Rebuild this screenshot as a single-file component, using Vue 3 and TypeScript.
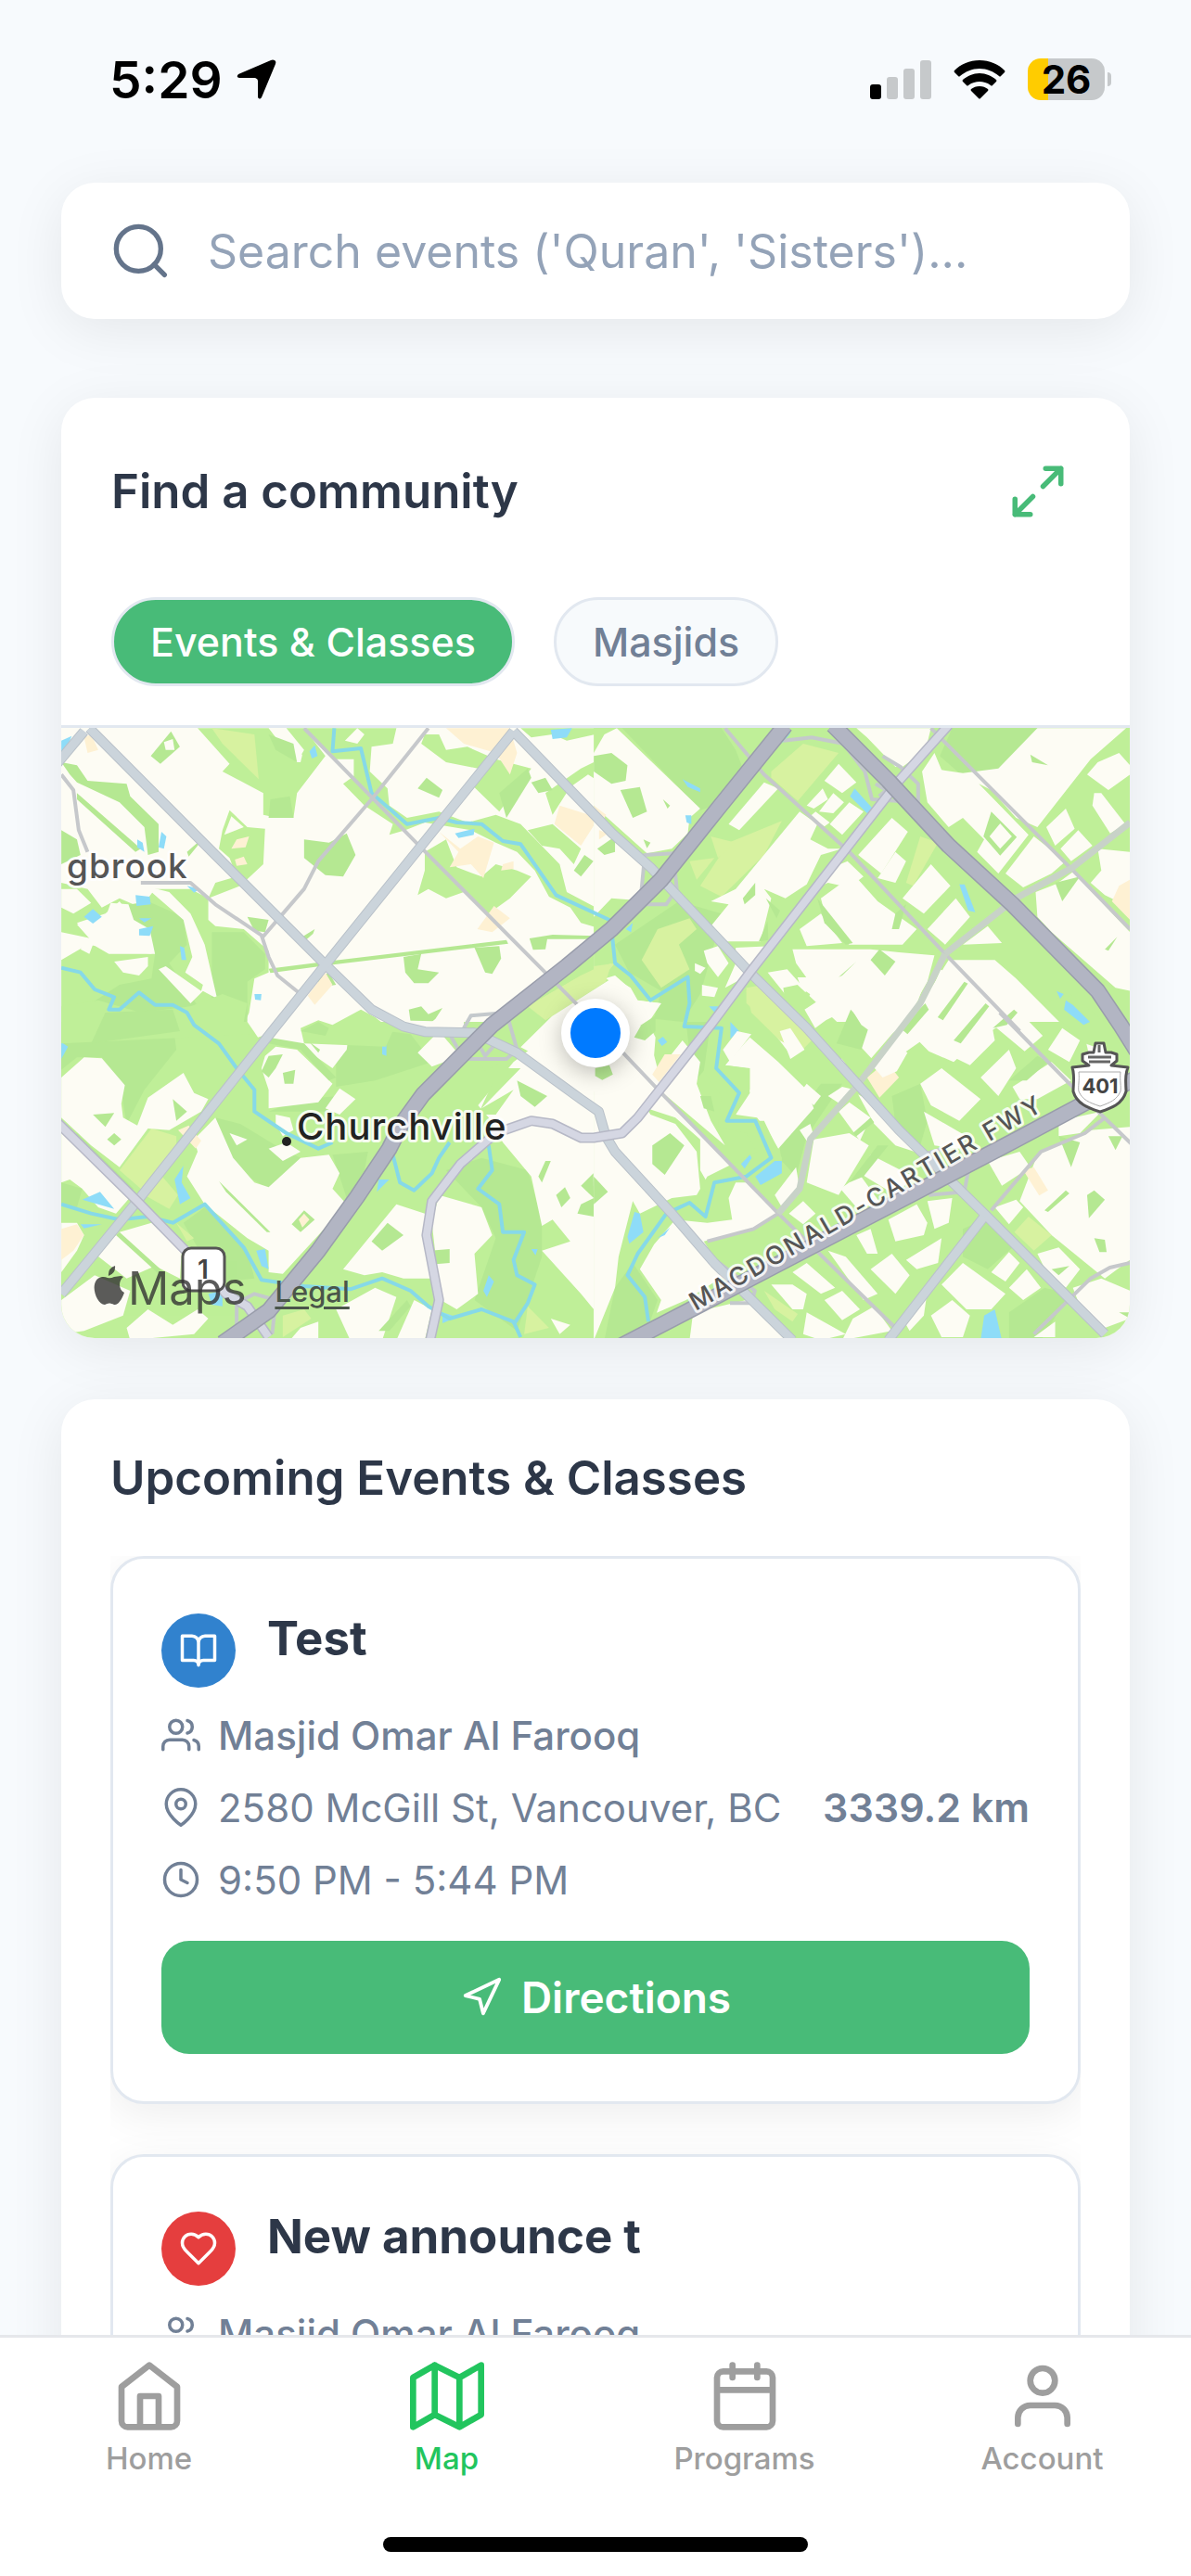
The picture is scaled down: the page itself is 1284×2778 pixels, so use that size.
<script setup lang="ts">
import { ref } from 'vue'

interface Shape {
  fill: string
  points: string[]
}
interface Line {
  kind: string
  points: string
}
interface EventItem {
  title: string
  org: string
  address: string
  distance: string
  time: string
  tone: 'blue' | 'red'
  icon: string
}

const land = '#fdfcf4'
const park = '#bfef98'
const wood = '#b5e892'
const field = '#d7f2a0'
const water = '#8edcf8'
const sand = '#fef1d3'

// Map tiles: origin of each quarter in survey units, with its ground cover
const tiles: { x: number; y: number; shapes: Shape[] }[] = [
  {
    x: 0,
    y: 0,
    shapes: [
      { fill: land, points: ['0,0 1516,0 1516,1000 0,1000'] },
      {
        fill: park,
        points: [
          '400,40 600,40 620,70 650,120 680,150 700,110 650,40 700,40 760,130 720,190 680,250 670,330 625,330 585,320 585,250 520,210 470,180 490,155',
          '700,40 960,40 950,90 890,100 885,180 935,235 940,290 990,330 1080,310 1160,345 1240,320 1310,350 1420,480 1440,570 1530,625 1568,600 1568,700 1480,670 1450,620 1390,585 1350,500 1300,440 1240,410 1170,370 1040,345 985,370 940,385 950,350 870,290 810,220 840,195 840,140 780,140',
          '1040,60 1080,60 1100,110 1160,100 1240,140 1340,170 1250,310 1170,220 1190,170 1100,150 1030,90',
          '490,305 540,360 590,365 585,480 520,550 430,590 450,540 510,520 490,460 460,430 470,370',
          '16,540 90,560 130,620 180,590 240,620 280,560 380,560 430,590 430,660 450,680 530,690 600,760 600,830 560,850 545,960 530,1000 16,1000 16,790 90,740 200,760 270,770 270,740 220,660 180,600 140,640 60,670 100,720 16,700',
          '1040,440 1100,400 1130,490 1200,520 1240,480 1300,500 1340,520 1280,590 1220,640 1150,570 1100,590 1050,560 1020,580 1040,500',
          '1310,40 1568,40 1568,110 1520,60 1440,80 1400,60 1340,70',
          '1380,250 1480,170 1516,150 1568,200 1568,240 1500,190 1450,230 1400,320',
          '1330,370 1400,350 1480,430 1460,480 1420,430 1370,420',
          '1320,920 1450,800 1516,770 1516,1000 1300,1000',
        ],
      },
      {
        fill: wood,
        points: [
          '16,150 60,160 90,210 200,220 210,260 290,350 290,440 260,450 250,360 180,280 60,215 40,190',
          '16,370 60,400 70,450 16,480',
          '60,250 240,430 225,440 60,270',
          '268,130 325,50 350,100 295,155',
          '1045,200 1090,240 1080,265 1020,235',
          '700,400 770,410 820,380 845,450 810,520 760,515 700,460',
          '600,818 760,795 1270,725 1275,737 760,808 605,832',
          '980,780 1030,770 1020,820 1080,830 1050,865 1010,865 985,830',
          '1180,750 1250,745 1255,785 1230,835 1210,830',
          '1335,720 1400,708 1520,712 1520,722 1385,722 1380,755 1345,757',
          '995,950 1030,940 1050,965 1090,945 1070,980 1050,1000 1000,990',
          '1460,500 1490,450 1515,470 1480,520',
          '1340,215 1380,200 1400,240 1360,250',
          '540,650 600,660 590,700 560,695',
          '695,715 730,690 725,705 705,725',
          '370,440 410,400 400,420 375,455',
          '160,620 260,600 360,650 370,740 320,800 430,990 200,1000 100,930 180,870 270,850 280,770',
          '440,700 530,700 590,770 590,820 540,860 540,990 440,1000',
          '740,850 770,830 790,870 740,880',
          '1250,250 1330,170 1340,200 1270,330',
          '600,60 670,90 680,150 620,110',
          '605,270 660,260 670,330 600,330',
        ],
      },
      {
        fill: field,
        points: ['440,40 560,60 572,205 470,90', '1330,940 1480,840 1516,820 1516,880 1380,990'],
      },
      {
        fill: land,
        points: [
          '495,325 530,360 475,385',
          '305,85 330,75 335,110 310,110',
          '16,560 60,560 100,605 50,640 16,620',
          '250,550 320,570 380,640 420,740 455,915 415,890 380,930 290,820 310,810 410,890 415,870 365,830 385,780 360,660 290,590',
          '165,795 260,780 260,810 235,840 190,830',
          '60,675 140,655 155,605 205,610 220,660 265,690 280,770 150,770 105,740 95,770 70,755 95,720',
          '680,120 695,125 690,150 680,150',
          '815,80 850,40 870,60 850,90',
        ],
      },
      {
        fill: sand,
        points: [
          '1100,40 1280,40 1300,120 1280,190 1240,120 1150,90',
          '80,70 100,60 120,110 90,120',
          '1420,290 1530,330 1480,420 1405,350',
          '1235,615 1280,655 1230,700 1188,690',
          '760,830 780,870 730,935 710,905',
          '510,400 545,390 535,425 495,430',
          '505,465 530,455 540,480 510,485',
          '1080,375 1140,430 1190,390 1235,410 1205,525 1170,480 1110,490 1135,440',
          '1260,480 1290,470 1290,495 1255,500',
        ],
      },
      {
        fill: water,
        points: [
          '230,400 245,410 250,440 230,425',
          '298,375 312,390 305,430 290,425',
          '715,115 730,95 738,130 722,138',
          '80,650 105,625 130,650 105,672',
          '225,580 265,585 268,610 228,615',
          '235,690 275,680 265,712 235,710',
          '235,655 270,655 250,668',
          '370,550 405,560 390,572',
          '350,745 362,750 368,790 355,790',
          '560,900 580,900 578,920 562,918',
          '1125,380 1180,365 1178,385 1135,395',
          '16,80 45,65 30,110 16,120',
          '1395,45 1455,40 1440,70 1400,75',
        ],
      },
    ],
  },
  {
    x: 1516,
    y: 0,
    shapes: [
      { fill: park, points: ['0,0 1520,0 1520,1000 0,1000'] },
      {
        fill: wood,
        points: [
          '80,40 360,40 400,110 420,170 340,290 300,305',
          '1010,40 1250,40 1140,185 1030,185 975,130',
          '60,740 240,600 360,640 330,780 300,900 250,990 170,980 190,890 100,830',
        ],
      },
      {
        fill: field,
        points: [
          '500,180 590,90 690,120 575,275 500,200',
          '380,410 530,340 480,450 360,585 300,550',
          '330,390 400,410 350,460',
          '270,470 340,460 290,530',
          '920,390 970,410 900,550 880,540',
          '180,690 270,655 290,690 240,740 270,820 190,880 135,790',
          '0,810 60,800 0,880',
          '430,880 480,870 590,1000 500,1000 430,930',
        ],
      },
      {
        fill: land,
        points: [
          '65,40 300,300 270,330 265,380 220,430 150,445 0,290 0,120 30,60',
          '0,320 140,490 140,570 100,595 50,590 0,650',
          '480,215 520,235 410,370 380,350',
          '690,155 740,215 700,250 650,210',
          '645,235 660,270 620,300 600,290',
          '675,250 705,280 675,315 635,310',
          '720,280 760,310 700,385 665,350',
          '625,310 665,345 650,358 610,325',
          '580,310 630,350 610,400 660,430 700,430 640,450 600,545 540,590 480,560 500,590 470,730 370,730 330,680 380,610 330,600 400,560',
          '840,330 885,375 810,510 745,450',
          '850,440 880,470 850,540 800,525',
          '950,480 1005,550 930,640 870,590',
          '1020,590 1060,650 990,740 940,690',
          '740,40 950,40 935,110 870,165 850,165 770,70',
          '925,180 960,120 980,175 1040,185 1140,170 1250,40 1500,40 1400,140 1250,360 1190,330 1120,240 1085,220 1225,385 1140,510 1080,440 1100,400 1040,330 1000,360 940,280',
          '1240,390 1330,470 1290,510 1210,555 1160,510',
          '1330,300 1355,365 1300,420 1275,360',
          '1365,370 1405,420 1345,470 1315,430',
          '1410,250 1430,250 1498,350 1455,380 1405,290',
          '1480,120 1511,160 1511,190 1450,240 1390,190 1420,150',
          '1245,570 1300,545 1320,530 1350,505 1511,700 1511,890 1470,880 1290,700 1250,650',
          '1420,430 1511,440 1511,620 1440,580 1400,540 1430,500',
          '640,590 700,540 730,510 800,600 910,690 870,740 720,740 660,680',
          '650,500 715,470 760,520 720,555 660,540 600,570',
          '560,755 780,755 860,765 960,775 940,860 870,1000 620,1000 640,960 600,920 620,880 570,800',
          '580,690 640,640 700,735 600,745',
          '1040,740 1110,680 1150,735',
          '1000,790 1130,790 1190,850 1320,1000 870,1000 940,900',
          '310,760 350,745 380,800 350,845 320,800',
          '400,750 500,745 450,830 370,880 400,800',
          '490,830 545,820 600,890 560,930',
          '285,800 315,815 300,835 285,825',
          '305,870 350,880 340,910 305,905',
          '0,860 60,840 100,880 120,920 190,930 150,1000 0,1000',
        ],
      },
      {
        fill: wood,
        points: [
          '0,130 50,120 95,160 90,210 50,220 0,180',
          '75,240 130,230 150,310 110,330',
          '195,270 215,290 208,300',
          '140,400 160,410 150,428',
          '10,430 60,390 60,440 30,450',
          '420,590 455,540 455,580 425,610',
          '485,590 525,630 515,655',
          '465,730 490,665 492,725',
          '1230,125 1280,160 1235,150',
          '1120,310 1192,392 1145,452 1098,390',
          '1300,540 1370,520 1320,600',
          '690,845 740,795 700,840',
          '780,790 805,755 850,795 820,840',
          '1440,755 1475,715 1450,760',
          '630,590 730,735 710,740 650,670',
          '840,690 850,640 880,610 860,690',
        ],
      },
      { fill: land, points: ['1145,348 1178,390 1145,430 1115,390'] },
      {
        fill: sand,
        points: ['1480,550 1511,530 1511,660 1460,600', '0,290 35,320 25,340 0,320', '15,370 40,380 15,400'],
      },
      {
        fill: water,
        points: [
          '735,235 790,305 770,315 722,260',
          '1030,545 1045,545 1075,635 1055,630',
          '250,205 300,235 300,247 265,230',
          '258,322 275,322 275,350 262,345',
          '1410,850 1435,880 1420,870',
          '90,690 110,670 105,700',
          '325,940 350,940 345,965',
          '545,50 555,55 530,90',
        ],
      },
    ],
  },
  {
    x: 0,
    y: 990,
    shapes: [
      { fill: park, points: ['0,0 1516,0 1516,1030 0,1030'] },
      {
        fill: wood,
        points: [
          '0,0 330,0 340,90 250,220 200,330 180,190 130,115 60,115 0,170',
          '450,310 520,330 620,400 690,440 600,540 540,500 480,420',
          '790,100 870,20 1000,40 1060,130 900,190 790,210',
          '360,650 420,600 540,740 560,830 480,840 400,730',
          '1100,480 1200,440 1330,480 1370,640 1370,760 1300,1000 1180,900 1240,700 1200,600',
          '780,430 880,420 870,480 820,570',
          '700,290 600,290 690,250 800,240 770,290',
        ],
      },
      {
        fill: field,
        points: [
          '270,345 340,370 340,400 240,540 180,480',
          '300,500 345,560 320,605 250,560',
          '340,650 390,700 370,710',
          '640,950 700,930 720,960 640,1020',
          '1330,920 1390,990 1320,1010',
        ],
      },
      {
        fill: land,
        points: [
          '16,180 80,115 130,118 195,205 185,265 190,310 230,335 260,245 360,165 390,230 430,250 410,290 320,350 260,345 180,470 100,400 16,310',
          '16,350 80,400 215,560 170,620 120,600 75,540 40,510 16,520',
          '110,750 180,680 270,650 355,740 350,830 280,790 200,830',
          '16,650 60,650 80,690 60,740 16,810',
          '16,900 110,820 210,870 190,950 80,1000 16,1010',
          '200,990 260,930 330,980 400,930 430,960 390,1010 210,1030',
          '560,0 830,0 820,90 780,150 680,70 600,60',
          '590,110 620,80 680,90 780,200 740,260 600,280 600,220 580,150',
          '450,310 500,440 560,520 600,535 690,440 770,430 800,490 780,540 820,590 640,815 600,810 600,740 540,700 420,590 370,500 400,420 390,380',
          '620,300 660,310 670,350 640,370 620,330',
          '600,410 650,390 690,420 640,450',
          '800,215 845,250 800,300 760,280',
          '1020,100 1080,30 1140,110 1060,145',
          '490,360 540,380 510,400',
          '1190,270 1290,130 1380,50 1450,0 1516,0 1516,930 1480,880 1370,740 1450,710 1400,640 1370,660 1340,500 1260,390 1220,310',
          '960,590 1040,620 1060,830 980,830 920,810 870,820 810,800',
          '1080,560 1200,600 1230,690 1180,750 1190,880 1130,930 1085,900 1060,650',
          '790,930 900,860 960,890 920,1030 830,1030',
          '1010,900 1060,930 1040,1030 960,1030',
          '690,990 740,970 740,1030 660,1030',
          '1395,960 1450,980 1420,1010',
        ],
      },
      {
        fill: park,
        points: ['1250,150 1310,150 1200,280 1290,220 1240,300 1190,300'],
      },
      {
        fill: wood,
        points: [
          '640,165 675,155 670,200 645,200',
          '715,65 745,90 740,100',
          '600,50 700,70 790,180 770,190 690,90 600,70',
          '580,160 600,110 640,105 620,150 600,180',
          '1300,190 1385,240 1350,275 1310,240',
          '935,650 980,690 920,740 890,710',
          '910,1000 990,900 1000,920 940,1000',
          '1055,740 1110,735 1110,780 1055,785',
          '1480,530 1515,490 1516,570',
          '1410,560 1435,535 1450,570 1425,600',
          '1480,590 1516,570 1516,630 1470,620',
          '1360,500 1380,450 1395,450 1370,520',
          '105,300 165,295 140,340',
          '330,250 370,290 340,320',
          '145,380 165,360 185,380 165,400',
          '60,360 220,540 210,550 50,370',
          '460,515 605,680 595,680 480,550',
          '180,680 310,815 290,815 170,690',
          '16,520 75,540 60,600 16,590',
          '665,655 700,610 730,640 690,680',
        ],
      },
      {
        fill: sand,
        points: ['16,670 60,655 80,690 50,740 16,770', '345,350 375,335 410,385 395,410', '685,640 700,620 715,640 695,665'],
      },
      {
        fill: water,
        points: [
          '75,575 125,550 165,605 120,590',
          '335,510 360,465 355,520 380,570 350,590',
          '70,655 130,655 80,668',
          '565,740 590,735 600,800 580,790',
          '832,25 850,22 850,45 832,42',
          '920,60 932,65 932,110 920,105',
          '910,510 940,510 905,550',
          '1205,870 1220,820 1235,840 1215,890',
          '16,65 35,80 16,120',
          '430,880 470,870 470,920 440,915',
          '1090,940 1130,955 1090,975',
          '1340,735 1358,735 1352,755',
        ],
      },
    ],
  },
  {
    x: 1516,
    y: 990,
    shapes: [
      { fill: park, points: ['0,0 1520,0 1520,1030 0,1030'] },
      {
        fill: wood,
        points: [
          '1040,670 1100,640 1190,720 1110,800 1040,760',
          '1170,940 1270,860 1340,880 1260,1030 1170,1030',
          '840,240 920,200 940,320 920,400 850,330',
          '520,380 640,200 700,200 600,370 570,500 530,450',
          '260,0 340,0 330,130 280,200',
        ],
      },
      {
        fill: land,
        points: [
          '0,0 90,90 200,240 520,620 470,660 310,710 370,820 260,900 0,1030',
          '440,50 520,130 600,220 620,280 520,410 500,370 460,310 400,300 440,230 430,150 370,140',
          '160,190 250,60 300,130 290,200 330,320 370,400 200,235',
          '510,40 550,30 580,90 560,115',
          '600,200 640,240 620,270 580,230',
          '690,130 790,0 870,0 780,120 740,140',
          '830,60 900,0 950,40 850,120',
          '920,60 960,20 1000,30 950,90',
          '1000,0 1120,0 1130,60 1060,140 970,90',
          '920,200 980,150 1090,250 1030,320 950,270',
          '1090,180 1170,90 1190,150 1140,240',
          '1180,210 1290,130 1345,190 1250,250 1200,250',
          '1280,90 1320,20 1370,60 1340,130',
          '1380,30 1440,100 1400,130',
          '660,240 700,210 735,220 700,270',
          '580,350 610,330 620,370 600,385',
          '620,380 720,360 775,400 690,560 600,520',
          '690,290 720,260 780,310 750,385',
          '745,235 800,270 930,430 850,400 790,330',
          '780,430 900,500 850,560 750,490',
          '930,290 1050,370 1030,410 960,400',
          '695,540 750,495 810,590 740,600',
          '510,560 570,470 580,540 530,600',
          '550,620 590,580 625,620 590,655',
          '1110,450 1200,420 1230,470 1150,530',
          '1310,320 1430,290 1370,360 1310,370',
          '1250,430 1400,350 1511,340 1511,770 1440,830 1290,690 1200,580',
          '1130,600 1190,575 1210,600 1170,655',
          '830,640 910,590 940,650 930,690 850,710',
          '940,580 1010,570 1000,650 960,670',
          '740,690 780,670 800,750 770,750',
          '880,770 980,700 970,780 910,800',
          '780,800 840,750 890,820 850,880',
          '1040,780 1160,880 1120,930 1050,930 980,850',
          '1120,810 1170,745 1200,780 1160,840',
          '1170,860 1220,800 1260,860 1210,900',
          '1250,750 1310,730 1370,800 1330,860 1280,820',
          '1350,860 1430,830 1511,870 1511,960 1440,990 1370,920',
          '660,740 710,760 800,880 760,900',
          '560,810 600,780 680,860 640,880',
          '500,850 560,850 600,880 590,930 560,930',
          '270,1030 280,940 430,900 560,1030',
          '600,940 710,1010 640,1030 590,1010',
          '650,900 700,870 750,930 700,965',
          '730,960 790,920 840,1000 700,1030',
          '870,960 940,870 930,950 890,1000',
          '950,950 1010,900 1060,950 1040,1020 980,1020',
          '1240,1020 1300,970 1300,1020',
        ],
      },
      {
        fill: park,
        points: [
          '330,0 440,40 370,140 440,150 440,220 400,280 400,320 480,320 530,440 520,520 400,520 380,570 390,640 320,650 230,640 170,720 130,800 190,900 150,1030 0,1030 60,860 70,760 110,580 130,620 220,570 290,560 320,500 460,420 430,360 350,340 360,240 310,160',
          '150,280 230,310 300,380 300,480 340,560 300,540 290,420 230,330 160,300',
          '430,800 480,720 540,680 560,720 440,850',
        ],
      },
      {
        fill: wood,
        points: [
          '165,400 215,360 255,400 200,495 165,460',
          '0,500 40,550 0,590',
          '300,240 330,240 340,290 310,280',
          '60,860 110,780 180,900 140,1030 30,1030',
          '1170,190 1250,110 1280,130 1220,190',
          '1390,560 1410,545 1440,575 1395,635',
          '1270,610 1330,545 1340,555 1280,615',
          '1410,700 1440,705 1445,745 1425,745',
          '1310,370 1370,390 1345,470',
          '1450,370 1490,370 1470,415',
          '1290,800 1340,790 1310,820',
          '1480,940 1511,940 1511,960',
          '730,360 780,310 790,325 740,370',
          '720,520 800,400 830,400 760,500',
        ],
      },
      {
        fill: sand,
        points: ['770,180 825,128 860,180 805,245', '1210,480 1240,470 1280,545 1255,562'],
      },
      {
        fill: field,
        points: ['1185,680 1225,630 1290,690 1240,740', '480,870 575,945 560,970 510,930', '490,0 560,0 600,70 570,90'],
      },
      {
        fill: water,
        points: [
          '1100,950 1130,930 1150,1030 1090,1030',
          '455,500 510,450 530,450 530,490 470,528',
          '415,460 440,430 445,440 425,475',
          '115,615 130,620 140,680 100,718 95,695',
          '180,700 215,665 200,690',
          '180,60 195,48 207,65 192,78',
          '385,0 410,30 385,55',
        ],
      },
    ],
  },
  // Ground that crosses the quarters' shared edges
  {
    x: 0,
    y: 0,
    shapes: [
      {
        fill: park,
        points: [
          '16,940 120,920 240,960 380,940 470,900 540,930 530,990 560,1030 16,1060',
          '690,1010 740,985 780,1000 860,950 900,975 950,1020 930,1070 700,1060',
          '1240,1000 1400,900 1516,830 1600,880 1516,960 1300,1090 1210,1150 1180,1100',
          '2050,880 2090,870 2220,1010 2300,1110 2250,1160 2180,1060 2060,960',
          '2780,930 2860,900 3027,1060 3027,1110 2900,1060',
        ],
      },
      {
        fill: field,
        points: ['1330,940 1480,840 1566,800 1550,860 1380,985', '1946,890 1996,875 2130,1050 2100,1085 2040,1050 1960,960'],
      },
      {
        fill: wood,
        points: ['690,1020 740,990 770,1010 760,1035', '2200,1060 2240,950 2290,1010 2270,1080', '140,960 330,950 350,1020 100,1060'],
      },
      {
        fill: land,
        points: [
          '950,985 1150,990 1150,1015 1040,1020 965,1008',
          '560,950 590,920 640,960 620,1020 570,1040 540,990',
          '1571,846 1620,880 1640,920 1706,930 1666,985 1690,1040 1686,1098 1700,1160 1680,1200 1640,1270 1552,1249 1456,1160 1310,1072 1398,972',
          '2090,846 2454,846 2430,920 2390,1000 2330,1050 2270,1000 2240,945 2170,985 2140,1010 2110,950 2150,920 2100,880',
          '2378,990 2454,925 2493,821 2589,858 2685,921 2781,1035 2730,1085 2650,1009 2600,1047 2530,1120 2460,1085',
          '2300,1130 2360,1060 2400,1090 2370,1150 2330,1170',
          '2040,1020 2070,1010 2110,1080 2070,1110',
          '1880,1080 1920,1020 1960,1030 1900,1120',
        ],
      },
      {
        fill: wood,
        points: [
          '1650,1000 1690,970 1690,1020 1660,1050 1630,1040',
          '2485,975 2560,860 2570,866 2500,985',
          '2530,1050 2620,930 2630,940 2550,1060',
          '2640,1010 2700,950 2710,960 2680,1000',
          '1520,1140 1560,1130 1570,1160 1540,1178 1520,1165',
          '2380,1010 2450,930 2460,950 2400,1030',
        ],
      },
      { fill: sand, points: ['1681,1160 1716,1095 1761,1095 1700,1185'] },
      { fill: water, points: ['2846,920 2866,935 2914,990 2896,1000 2841,950', '2820,890 2840,900 2830,915'] },
    ],
  },
]

const rivers = [
  '785,40 780,115 860,105 890,250 990,350 1080,330 1130,345 1200,350 1260,405 1310,415 1410,580 1560,660 1566,690 1576,800 1620,840 1676,920 1781,845 1786,930 1771,1005 1876,1010 1861,1140 1926,1220 1891,1310 1971,1310 2016,1430 1946,1490 1856,1510 1831,1620 1786,1575 1721,1610 1640,1740 1611,1810 1660,1880 1670,1960',
  '16,815 70,830 110,885 165,910 150,950 180,950 235,895 280,935 330,935 370,960 390,1000 460,1060 510,1140 560,1210 560,1280 650,1350 740,1400 780,1380',
  '16,1580 100,1610 180,1630 260,1620 330,1640 420,1580 530,1720 580,1825 700,1845 830,1855 920,1820 1000,1860 1050,1910 1110,1950 1200,1920 1290,1960 1310,2010',
  '950,1420 970,1510 1010,1535 1060,1480 1080,1430 1110,1380',
  '1220,1390 1230,1470 1190,1530 1250,1580 1260,1670 1320,1670 1290,1760 1300,1810 1350,1840 1330,1900 1290,1970',
]

const minor = [
  '700,40 1020,415 1470,935 1706,1220 2036,1610 2366,1980',
  '1050,40 890,270 740,470 700,560 640,640 580,720',
  '16,190 50,240 65,370 90,440',
  '240,540 380,540 450,610 580,710 600,780 625,840 690,900',
  '1886,40 1996,190 2236,440 2506,770 2716,1020',
  '2660,960 2856,1190 3040,1395',
  '2466,40 2866,500 3027,690',
  '1836,1700 1966,1660 2036,1610',
  '3027,1770 2970,1785 2916,1820 2756,2000',
  '2956,1300 2900,1350 2776,1410 2636,1600',
]
const street = ['3027,345 2866,490 2706,590 2506,770', '2506,770 2436,930 2376,1020 2256,1200 2126,1370 2096,1530 2036,1610']
const major = [
  '95,40 450,450 760,805 890,950 980,1005 1040,1022 1180,1025 1300,1090 1480,1240 1530,1280 1550,1360 1576,1410 1736,1610 1856,1770 2076,2020',
  '1290,50 760,805 610,1020 230,1570 16,1870',
  '0,160 80,50',
  '1290,50 1568,380 1676,490 1956,830 2116,1010 2376,1340 2456,1430 2616,1610 2956,2000',
  '2616,1620 2346,2020',
]
const arterial = [
  '2516,30 2376,210 1956,830 1846,1000 1640,1300 1596,1350 1516,1365 1480,1365 1400,1320 1340,1310 1240,1350 1140,1450 1060,1570 1045,1680 1080,1890 1055,2020',
  '0,1310 230,1570 400,1770 480,1870 540,1910 600,2010',
]
const ramps = [
  '1110,1030 1150,1110 1270,1110 1300,1080 1270,960 1170,970 1150,1010',
  '1190,1060 1210,1100 1240,1060',
  '1650,570 1660,450 1740,445 1750,560 1720,610 1660,610',
  '2050,80 2130,70 2220,90 2280,180 2300,270 2430,280 2430,220 2380,165 2330,130',
  '2310,220 2340,240 2320,260',
  '510,2000 510,1900 560,1870 620,1890 610,2000',
  '1870,1770 1970,1860 1960,1900 1900,1900',
  '2440,1420 2500,1400 2570,1480 2560,1540 2460,1550',
]
const freeway = [
  '470,2030 600,1925 740,1730 850,1555 940,1400 975,1320 1035,1225 1230,1000 1440,810 1566,690 1706,530 1866,300 2056,30',
  '2190,30 2346,210 2516,420 2696,610 2936,890 3000,1000 3060,1110',
  '1590,2040 2000,1795 2400,1555 2700,1375 2920,1240 3050,1170',
]

const lines: Line[] = [
  ...rivers.map((points) => ({ kind: 'river', points })),
  ...minor.map((points) => ({ kind: 'minor', points })),
  ...street.map((points) => ({ kind: 'street', points })),
  ...ramps.map((points) => ({ kind: 'ramp', points })),
  ...major.map((points) => ({ kind: 'major-edge', points })),
  ...major.map((points) => ({ kind: 'major', points })),
  ...arterial.map((points) => ({ kind: 'arterial-edge', points })),
  ...arterial.map((points) => ({ kind: 'arterial', points })),
  ...freeway.map((points) => ({ kind: 'freeway-edge', points })),
  ...freeway.map((points) => ({ kind: 'freeway', points })),
]

const query = ref('')
const filters = ['Events & Classes', 'Masjids']
const activeFilter = ref(filters[0])

const events: EventItem[] = [
  {
    title: 'Test',
    org: 'Masjid Omar Al Farooq',
    address: '2580 McGill St, Vancouver, BC',
    distance: '3339.2 km',
    time: '9:50 PM - 5:44 PM',
    tone: 'blue',
    icon: 'M2 3h6a4 4 0 0 1 4 4v14a3 3 0 0 0-3-3H2z M22 3h-6a4 4 0 0 0-4 4v14a3 3 0 0 1 3-3h7z',
  },
  {
    title: 'New announce t',
    org: 'Masjid Omar Al Farooq',
    address: '2580 McGill St, Vancouver, BC',
    distance: '3339.2 km',
    time: '9:50 PM - 5:44 PM',
    tone: 'red',
    icon: 'M19 14c1.49-1.46 3-3.21 3-5.5A5.5 5.5 0 0 0 16.5 3c-1.76 0-3 .5-4.5 2-1.5-1.5-2.74-2-4.5-2A5.5 5.5 0 0 0 2 8.500c0 2.300 1.500 4.050 3 5.500l7 7z',
  },
]

const tabs = [
  { name: 'Home', icon: 'M3 9l9-7 9 7v11a2 2 0 0 1-2 2H5a2 2 0 0 1-2-2z M9 22V12h6v10' },
  { name: 'Map', icon: 'M1 6v16l7-4 8 4 7-4V2l-7 4-8-4z M8 2v16 M16 6v16' },
  {
    name: 'Programs',
    icon: 'M5 4h14a2 2 0 0 1 2 2v14a2 2 0 0 1-2 2H5a2 2 0 0 1-2-2V6a2 2 0 0 1 2-2z M16 2v4 M8 2v4 M3 10h18',
  },
  { name: 'Account', icon: 'M20 21v-2a4 4 0 0 0-4-4H8a4 4 0 0 0-4 4v2 M12 3a4 4 0 1 0 0 8a4 4 0 0 0 0-8z' },
]
const activeTab = ref('Map')
</script>

<template>
  <div class="screen">
    <header class="status">
      <div class="status-left">
        <span class="clock">5:29</span>
        <svg class="locate" viewBox="0 0 44 44"><path d="M42 1Q44 2 43 5L28 41Q26 44 24 41V23Q24 21 21 20H4Q0 19 3 16L38 1Q40 0 42 1z" /></svg>
      </div>
      <div class="status-right">
        <svg class="signal" viewBox="0 0 66 42">
          <rect x="0" y="26" width="12" height="16" rx="3" fill="#000" />
          <rect x="18" y="18" width="12" height="24" rx="3" />
          <rect x="36" y="9" width="12" height="33" rx="3" />
          <rect x="54" y="0" width="12" height="42" rx="3" />
        </svg>
        <svg class="wifi" viewBox="0 0 56 42">
          <path d="M28 0C39 0 48 4 55 11Q56 12 55 13L51 17Q50 18 49 17C43 12 36 9 28 9S13 12 7 17Q6 18 5 17L1 13Q0 12 1 11C8 4 17 0 28 0z" />
          <path d="M28 14C35 14 41 17 46 21Q47 22 46 23L42 27Q41 28 40 27C36 24 32 23 28 23S20 24 16 27Q15 28 14 27L10 23Q9 22 10 21C15 17 21 14 28 14z" />
          <path d="M28 28C32 28 34 29 37 31Q38 32 37 33L29 41Q28 42 27 41L19 33Q18 32 19 31C22 29 24 28 28 28z" />
        </svg>
        <div class="battery"><span class="battery-level">26</span></div>
      </div>
    </header>

    <main class="content">
      <label class="search">
        <svg class="stroke search-icon" viewBox="0 0 24 24"><circle cx="11" cy="11" r="9" /><path d="M21.500 21.500l-4.200-4.200" /></svg>
        <input v-model="query" type="text" aria-label="Search events" placeholder="Search events ('Quran', 'Sisters')..." />
      </label>

      <section class="card map-card">
        <div class="map-head">
          <h2>Find a community</h2>
          <button class="expand" type="button" aria-label="Expand map">
            <svg class="stroke" viewBox="0 0 24 24"><path d="M15 3h6v6 M9 21H3v-6 M21 3l-7 7 M3 21l7-7" /></svg>
          </button>
        </div>
        <div class="filters">
          <button
            v-for="filter in filters"
            :key="filter"
            type="button"
            class="chip"
            :class="{ active: filter === activeFilter }"
            @click="activeFilter = filter"
          >
            {{ filter }}
          </button>
        </div>
        <div class="map">
          <svg class="map-art" viewBox="0 0 1152 658" preserveAspectRatio="xMidYMid slice">
            <g transform="translate(-6 -13) scale(0.38265 0.33333)">
              <g v-for="(tile, n) in tiles" :key="n" :transform="`translate(${tile.x} ${tile.y})`">
                <template v-for="(shape, i) in tile.shapes" :key="i">
                  <polygon v-for="points in shape.points" :key="points" :points="points" :fill="shape.fill" />
                </template>
              </g>
              <polyline v-for="(line, i) in lines" :key="i" :points="line.points" :class="line.kind" class="way" />
            </g>
            <g class="place">
              <text x="6" y="162" class="town">gbrook</text>
              <circle cx="243" cy="446" r="5" fill="#222" />
              <text x="254" y="444" class="city">Churchville</text>
              <text transform="translate(684 629) rotate(-30)" class="route">MACDONALD-CARTIER FWY</text>
            </g>
            <g transform="translate(130 560)">
              <rect x="1" y="1" width="45" height="46" rx="9" fill="#fff" stroke="#555" stroke-width="3" />
              <text x="23" y="34" class="shield">1</text>
            </g>
            <g transform="translate(1088 338)">
              <path d="M20 26L13 21V14L20 12H25L27 2H36L38 12H44L50 14V21L44 26L62 28C58 38 60 46 60 54C56 68 44 72 32 76C20 72 7 68 3 54C3 46 5 38 2 28z" fill="#fff" stroke="#555" stroke-width="3" stroke-linejoin="round" />
              <path d="M19 17H44M20 22H43M31 4V12" stroke="#666" stroke-width="3" />
              <path d="M9 33H54C53 42 55 49 54 54C50 63 43 66 32 70C20 66 13 63 9 54C8 49 10 42 9 33z" fill="none" stroke="#aaa" />
              <text x="32" y="56" class="shield small">401</text>
            </g>
            <g class="brand">
              <path d="M57 592C61 592 64 590 67 592C61 597 62 606 68 609C65 617 61 623 57 622C53 620 50 620 47 622C40 622 34 608 36 600C38 592 45 591 50 593Q53 594 57 592z M51 591Q50 583 58 580Q59 588 51 591z" />
              <text x="72" y="622">Maps</text>
            </g>
          </svg>
          <a class="legal" href="#legal">Legal</a>
          <span class="pin"></span>
        </div>
      </section>

      <section class="card events-card">
        <h2>Upcoming Events &amp; Classes</h2>
        <div class="event-list">
          <article v-for="event in events" :key="event.title" class="event">
            <div class="event-head">
              <span class="badge" :class="event.tone">
                <svg class="stroke" viewBox="0 0 24 24"><path :d="event.icon" /></svg>
              </span>
              <h3>{{ event.title }}</h3>
            </div>
            <p class="row org">
              <svg class="stroke" viewBox="0 0 24 24"><circle cx="9" cy="7" r="4" /><path d="M17 21v-2a4 4 0 0 0-4-4H5a4 4 0 0 0-4 4v2 M23 21v-2a4 4 0 0 0-3-3.870 M16 3.130a4 4 0 0 1 0 7.750" /></svg>
              <span>{{ event.org }}</span>
            </p>
            <p class="row">
              <svg class="stroke" viewBox="0 0 24 24"><path d="M21 10c0 7-9 13-9 13s-9-6-9-13a9 9 0 0 1 18 0z" /><circle cx="12" cy="10" r="3" /></svg>
              <span>{{ event.address }}</span>
              <strong>{{ event.distance }}</strong>
            </p>
            <p class="row">
              <svg class="stroke" viewBox="0 0 24 24"><circle cx="12" cy="12" r="10" /><path d="M12 6v6l4 2" /></svg>
              <span>{{ event.time }}</span>
            </p>
            <button class="directions" type="button">
              <svg class="stroke" viewBox="0 0 24 24"><path d="M3 11l19-9-9 19-2-8z" /></svg>
              Directions
            </button>
          </article>
        </div>
      </section>
    </main>

    <nav class="tabs">
      <button
        v-for="tab in tabs"
        :key="tab.name"
        type="button"
        class="tab"
        :class="{ current: tab.name === activeTab }"
        @click="activeTab = tab.name"
      >
        <svg class="stroke" viewBox="0 0 24 24"><path :d="tab.icon" /></svg>
        {{ tab.name }}
      </button>
      <span class="home-bar"></span>
    </nav>
  </div>
</template>

<style>
body {
  margin: 0;
  background: #f7fafc;
}
</style>

<style scoped>
.screen {
  display: flex;
  flex-direction: column;
  height: 100vh;
  overflow: hidden;
  background: #f7fafd;
  color: #2d3748;
  font-family: Inter, 'Liberation Sans', sans-serif;
}
button {
  border: 0;
  margin: 0;
  padding: 0;
  background: none;
  color: inherit;
  font: inherit;
}
h2,
h3,
p {
  margin: 0;
}
.stroke {
  display: block;
  flex: none;
  fill: none;
  stroke: currentColor;
  stroke-width: 2;
  stroke-linecap: round;
  stroke-linejoin: round;
}

.status {
  display: flex;
  flex: none;
  justify-content: space-between;
  align-items: center;
  height: 171px;
  padding: 0 86px 0 118px;
  color: #000;
}
.status-left,
.status-right {
  display: flex;
  align-items: center;
}
.status-left {
  gap: 14px;
}
.status-right {
  gap: 24px;
}
.clock {
  font-size: 55px;
  font-weight: 600;
}
.locate {
  width: 44px;
}
.signal {
  width: 66px;
  fill: #c6c9cb;
}
.wifi {
  width: 56px;
}
.battery {
  display: flex;
  align-items: center;
  gap: 3px;
}
.battery::after {
  content: '';
  width: 4px;
  height: 15px;
  border-radius: 0 4px 4px 0;
  background: #c6c9cb;
}
.battery-level {
  width: 83px;
  border-radius: 14px;
  background: linear-gradient(90deg, #ffcc00 26%, #c6c9cb 26%);
  font-size: 42px;
  font-weight: 700;
  line-height: 45px;
  text-align: center;
}

.content {
  display: flex;
  flex: 1;
  flex-direction: column;
  min-height: 0;
  padding: 26px 66px 0;
}
.search,
.card {
  flex: none;
  border-radius: 36px;
  background: #fff;
  box-shadow: 0 12px 60px rgba(0, 0, 0, 0.08);
}
.search {
  display: flex;
  align-items: center;
  gap: 40px;
  height: 147px;
  padding: 0 54px;
  margin-bottom: 85px;
}
.search-icon {
  width: 64px;
  color: #64748b;
}
.search input {
  flex: 1;
  min-width: 0;
  border: 0;
  padding: 0;
  outline: 0;
  background: none;
  color: #2d3748;
  font: 400 50px/60px Inter, 'Liberation Sans', sans-serif;
}
.search input::placeholder {
  color: #94a3b8;
  opacity: 1;
}

.card h2 {
  font-size: 51px;
  font-weight: 600;
  line-height: 60px;
}
.map-card {
  overflow: hidden;
  margin-bottom: 66px;
}
.map-head {
  display: flex;
  justify-content: space-between;
  align-items: center;
  padding: 68px 66px 0 54px;
}
.expand {
  color: #48bb78;
}
.expand svg {
  width: 66px;
}
.filters {
  display: flex;
  gap: 42px;
  padding: 81px 54px 42px;
  border-bottom: 3px solid #e2e8f0;
}
.chip {
  border: 3px solid #e2e8f0;
  border-radius: 60px;
  padding: 0 39px;
  background: #f7fafc;
  color: #718096;
  font-size: 43px;
  font-weight: 500;
  line-height: 90px;
}
.chip.active {
  background: #48bb78;
  color: #fff;
}

.map {
  position: relative;
  aspect-ratio: 1152 / 658;
}
.map-art {
  display: block;
  width: 100%;
  height: 100%;
}
.way {
  fill: none;
  stroke-linejoin: round;
  vector-effect: non-scaling-stroke;
}
.river {
  stroke: #86d9e8;
  stroke-width: 4px;
}
.minor {
  stroke: #c6c8cb;
  stroke-width: 4px;
}
.street {
  stroke: #c8d2c8;
  stroke-width: 7px;
}
.ramp {
  stroke: #c4c9cc;
  stroke-width: 4px;
}
.major-edge {
  stroke: #b9c1c9;
  stroke-width: 11px;
}
.major {
  stroke: #cbd4db;
  stroke-width: 9px;
}
.arterial-edge {
  stroke: #b6b8c6;
  stroke-width: 11px;
}
.arterial {
  stroke: #d5d7e3;
  stroke-width: 8px;
}
.freeway-edge {
  stroke: #999dab;
  stroke-width: 18px;
}
.freeway {
  stroke: #b2b5c3;
  stroke-width: 15px;
}
.place text {
  paint-order: stroke;
  stroke: rgba(255, 255, 255, 0.85);
  stroke-width: 6px;
  stroke-linejoin: round;
  font-weight: 500;
}
.town {
  fill: #555;
  font-size: 37px;
  letter-spacing: 1px;
}
.city {
  fill: #222;
  font-size: 40px;
  letter-spacing: 1px;
}
.route {
  fill: #555;
  font-size: 27px;
  letter-spacing: 3px;
}
.shield {
  fill: #444;
  font-size: 28px;
  font-weight: 600;
  text-anchor: middle;
}
.shield.small {
  font-size: 22px;
  font-weight: 700;
}
.brand {
  fill: #333;
  opacity: 0.8;
  font-size: 49px;
}
.legal {
  position: absolute;
  left: 20%;
  bottom: 32px;
  color: #4a554a;
  font-size: 31px;
  font-weight: 500;
  line-height: 36px;
  text-decoration: underline;
  text-underline-offset: 5px;
}
.pin {
  position: absolute;
  top: 50%;
  left: 50%;
  width: 54px;
  height: 54px;
  border: 10px solid #fff;
  border-radius: 50%;
  background: #007aff;
  box-shadow: 0 6px 24px rgba(0, 0, 0, 0.25);
  transform: translate(-50%, -50%);
}

.events-card {
  display: flex;
  flex-direction: column;
  gap: 54px;
  padding: 55px 53px 60px;
}
.event-list {
  display: flex;
  flex-direction: column;
  gap: 54px;
  overflow: hidden;
}
.event {
  display: flex;
  flex-direction: column;
  border: 3px solid #e2e8f0;
  border-radius: 36px;
  padding: 50px 52px 51px;
  background: #fff;
  box-shadow: 0 12px 48px rgba(0, 0, 0, 0.07);
}
.event-head {
  display: flex;
  gap: 34px;
  margin-bottom: 12px;
}
.badge {
  display: flex;
  justify-content: center;
  align-items: center;
  width: 80px;
  height: 80px;
  border-radius: 50%;
  margin-top: 9px;
  color: #fff;
}
.badge.blue {
  background: #3182ce;
}
.badge.red {
  background: #e53e3e;
}
.badge svg {
  width: 42px;
}
.event h3 {
  font-size: 51px;
  font-weight: 700;
  line-height: 72px;
}
.row {
  display: flex;
  align-items: center;
  gap: 19px;
  height: 78px;
  color: #718096;
  font-size: 42px;
  white-space: nowrap;
}
.row svg {
  width: 42px;
}
.row.org {
  font-weight: 500;
}
.row strong {
  margin-left: auto;
  font-size: 43px;
  font-weight: 600;
}
.directions {
  display: flex;
  justify-content: center;
  align-items: center;
  gap: 20px;
  height: 122px;
  border-radius: 30px;
  margin-top: 27px;
  background: #48bb78;
  color: #fff;
  font-size: 46px;
  font-weight: 600;
}
.directions svg {
  width: 46px;
}

.tabs {
  display: flex;
  flex: none;
  flex-wrap: wrap;
  justify-content: center;
  position: relative;
  border-top: 3px solid #e5e7eb;
  background: #fff;
}
.tab {
  display: flex;
  flex-direction: column;
  align-items: center;
  gap: 7px;
  width: 25%;
  padding: 23px 0 65px;
  color: #9e9e9e;
  font-size: 33px;
  font-weight: 500;
  line-height: 40px;
}
.tab.current {
  color: #22c55e;
}
.tab svg {
  width: 80px;
}
.home-bar {
  width: 458px;
  height: 16px;
  border-radius: 8px;
  margin-bottom: 26px;
  background: #000;
}
</style>
